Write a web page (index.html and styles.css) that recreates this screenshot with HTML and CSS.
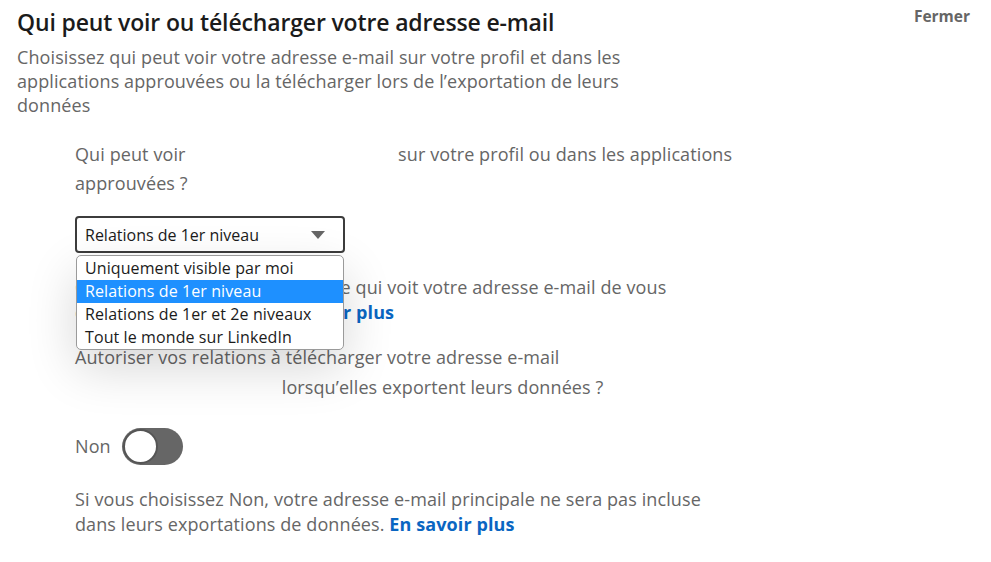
FILE: index.html
```html
<!DOCTYPE html>
<html lang="fr">
<head>
<meta charset="utf-8">
<title>Adresse e-mail</title>
<link rel="stylesheet" href="styles.css">
</head>
<body>
<div class="page">
  <header class="head">
    <h1 class="title">Qui peut voir ou télécharger votre adresse e-mail</h1>
    <button class="close">Fermer</button>
  </header>
  <p class="lead">Choisissez qui peut voir votre adresse e-mail sur votre profil et dans les<br>applications approuvées ou la télécharger lors de l’exportation de leurs<br>données</p>

  <section class="settings">
    <p class="question">Qui peut voir <span class="redact redact-a"></span> sur votre profil ou dans les applications<br>approuvées ?</p>

    <div class="select-wrap">
      <div class="select">
        <span>Relations de 1er niveau</span>
        <svg class="caret" width="16" height="10" viewBox="0 0 16 10"><path d="M1 1h14L8 9z" fill="#666"/></svg>
      </div>
      <ul class="menu">
        <li>Uniquement visible par moi</li>
        <li class="active">Relations de 1er niveau</li>
        <li>Relations de 1er et 2e niveaux</li>
        <li>Tout le monde sur LinkedIn</li>
      </ul>
    </div>

    <p class="hint">Choisissez avec soin la personne qui voit votre adresse e-mail de vous<br>contacter rapidement. <a class="link" href="#">En savoir plus</a></p>

    <p class="question q2">Autoriser vos relations à télécharger votre adresse e-mail<br><span class="redact redact-b"></span> lorsqu’elles exportent leurs données ?</p>

    <div class="toggle-row">
      <span>Non</span>
      <span class="toggle"><span class="knob"></span></span>
    </div>

    <p class="note">Si vous choisissez Non, votre adresse e-mail principale ne sera pas incluse<br>dans leurs exportations de données. <a class="link" href="#">En savoir plus</a></p>
  </section>
</div>
</body>
</html>
```
FILE: styles.css
```css
* { box-sizing: border-box; }
html, body { margin: 0; padding: 0; background: #fff; }
body {
  font-family: "Open Sans", "Noto Sans", "Liberation Sans", sans-serif;
  color: #666;
  font-size: 18px;
  letter-spacing: 0.1px;
}
.page { padding: 8px 21px 0 17px; }
.head {
  display: flex;
  justify-content: space-between;
  align-items: flex-start;
}
.title {
  margin: 0;
  font-size: 23px;
  line-height: 28px;
  font-weight: 600;
  color: #1b1b1b;
  letter-spacing: -0.15px;
}
.close {
  border: 0;
  background: none;
  padding: 0;
  margin-top: -1px;
  font: inherit;
  font-size: 15.5px;
  font-weight: 700;
  color: #666;
  line-height: 18px;
  letter-spacing: 0;
}
.lead {
  margin: 9px 0 0;
  line-height: 24px;
}
.settings { padding-left: 58px; }
.question {
  margin: 23px 0 0;
  line-height: 29px;
}
.redact {
  display: inline-block;
  background: #fff;
  vertical-align: middle;
  position: relative;
  z-index: 3;
}
.redact-a { width: 203px; height: 26px; }
.redact-b { width: 209px; height: 27px; margin-left: -7px; }
.select-wrap {
  position: relative;
  margin-top: 18px;
  width: 270px;
}
.select {
  height: 37px;
  border: 2px solid #3c3c3c;
  border-radius: 4px;
  display: flex;
  align-items: center;
  justify-content: space-between;
  padding: 0 17px 0 8px;
  font-size: 16px;
  color: #1b1b1b;
  letter-spacing: 0;
}
.caret { display: block; }
.menu {
  position: absolute;
  z-index: 5;
  left: 1px;
  top: 39px;
  width: 268px;
  margin: 0;
  padding: 1px 0 0;
  list-style: none;
  background: #fff;
  border: 1px solid #9a9a9a;
  border-radius: 5px;
  overflow: hidden;
  box-shadow: 0 18px 50px rgba(0,0,0,0.16);
}
.menu li {
  height: 23px;
  line-height: 23px;
  padding-left: 8px;
  font-size: 16px;
  color: #1b1b1b;
  letter-spacing: 0.1px;
}
.menu li.active { background: #1e90ff; color: #fff; }
.hint {
  margin: 22px 0 0;
  line-height: 25px;
}
.link {
  color: #0a66c2;
  font-weight: 700;
  text-decoration: none;
}
.q2 { margin-top: 17px; line-height: 30px; }
.toggle-row {
  margin-top: 25px;
  display: flex;
  align-items: center;
  gap: 11px;
  height: 37px;
}
.toggle {
  position: relative;
  width: 61px;
  height: 37px;
  border-radius: 19px;
  background: #666;
  display: flex;
  align-items: center;
  padding-left: 1px;
}
.knob {
  width: 35px;
  height: 35px;
  border-radius: 50%;
  background: #fff;
  border: 2px solid #555;
}
.note {
  margin: 22px 0 0;
  line-height: 25px;
}
```
